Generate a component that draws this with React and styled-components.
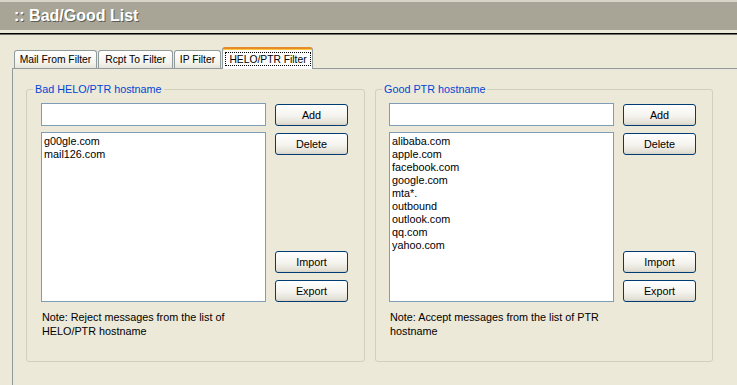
import React from 'react';
import styled, { createGlobalStyle } from 'styled-components';

const GlobalStyle = createGlobalStyle`
  html, body {
    margin: 0;
    overflow: hidden;
    background: #ece9d8;
    font-family: "Liberation Sans", Arial, sans-serif;
    font-size: 10.8px;
    color: #000;
  }
  * { box-sizing: border-box; }
`;

const Header = styled.header`
  height: 30px;
  border-top: 2px solid #d8d5c8;
  background: #a8a596;
  display: flex;
  align-items: center;
  padding-left: 14px;
`;

const Title = styled.h1`
  margin: 0;
  font-size: 16px;
  font-weight: bold;
  color: #fff;
  text-shadow: 1px 1px 0 #5e5c52;
`;

const Rule = styled.div`
  margin-top: 3px;
  height: 2px;
  border-top: 1px solid #000;
  border-bottom: 1px solid #6f6e66;
`;

const TabStrip = styled.div`
  position: relative;
  z-index: 1;
  display: flex;
  align-items: flex-end;
  gap: 1px;
  margin-top: 12px;
  padding-left: 14px;
  font-size: 10.3px;
`;

const Tab = styled.div`
  width: ${p => p.$w}px;
  height: 18px;
  border: 1px solid #919b9c;
  border-bottom: none;
  border-radius: 3px 3px 0 0;
  background: linear-gradient(#ffffff, #f3f2ec 70%, #e6e4da);
  display: flex;
  align-items: center;
  justify-content: center;
  white-space: nowrap;
`;

const ActiveTab = styled(Tab)`
  height: 22px;
  margin-bottom: -1px;
  border-top: 2px solid #e68b2c;
  box-shadow: inset 0 1px 0 #ffc83c;
  background: #fcfcfe;
  padding: 3px 1px 3px 2px;
`;

const Focus = styled.span`
  flex: 1;
  align-self: stretch;
  display: flex;
  align-items: center;
  justify-content: center;
  border: 1px dotted #000;
`;

const Panel = styled.div`
  margin-left: 12px;
  height: 317px;
  border-top: 1px solid #919b9c;
  border-left: 1px solid #919b9c;
  padding: 20px 0 0 13px;
  display: flex;
  gap: 10px;
`;

const Group = styled.div`
  position: relative;
  width: ${p => p.$w}px;
  height: 273px;
  border: 1px solid #d0d0bf;
  border-radius: 3px;
  padding: 13px 16px 0 ${p => p.$pl}px;
  display: flex;
  gap: 9px;
`;

const Legend = styled.span`
  position: absolute;
  top: -7px;
  left: 6px;
  padding: 0 2px;
  line-height: 13px;
  background: #ece9d8;
  color: #0046d5;
`;

const Column = styled.div`
  width: 225px;
  display: flex;
  flex-direction: column;
`;

const TextInput = styled.input`
  height: 23px;
  border: 1px solid #7f9db9;
  background: #fff;
  font: inherit;
  padding: 0 3px;
  outline: none;
`;

const ListBox = styled.div`
  margin-top: 6px;
  height: 170px;
  border: 1px solid #7f9db9;
  background: #fff;
  padding: 2px 2px;
`;

const ListItem = styled.div`
  line-height: 13px;
  white-space: nowrap;
`;

const Note = styled.p`
  margin: 8px 0 0 1px;
  line-height: 14px;
`;

const Buttons = styled.div`
  width: 73px;
  height: 199px;
  padding-top: 1px;
  display: flex;
  flex-direction: column;
  gap: 7px;
`;

const Button = styled.button`
  height: 22px;
  flex: none;
  margin-top: ${p => (p.$push ? 'auto' : '0')};
  border: 1px solid #003c74;
  border-radius: 3px;
  background: linear-gradient(#ffffff, #f4f3ee 55%, #e3e0d5 90%, #d6d0c5);
  font: inherit;
  color: #000;
  padding: 0;
`;

function ListPanel({ title, items, note, width, padLeft }) {
  return (
    <Group $w={width} $pl={padLeft}>
      <Legend>{title}</Legend>
      <Column>
        <TextInput type="text" />
        <ListBox>
          {items.map(item => (
            <ListItem key={item}>{item}</ListItem>
          ))}
        </ListBox>
        <Note>{note}</Note>
      </Column>
      <Buttons>
        <Button>Add</Button>
        <Button>Delete</Button>
        <Button $push>Import</Button>
        <Button>Export</Button>
      </Buttons>
    </Group>
  );
}

const badHosts = ['g00gle.com', 'mail126.com'];
const goodHosts = [
  'alibaba.com',
  'apple.com',
  'facebook.com',
  'google.com',
  'mta*.',
  'outbound',
  'outlook.com',
  'qq.com',
  'yahoo.com',
];

export default function App() {
  return (
    <>
      <GlobalStyle />
      <Header>
        <Title>:: Bad/Good List</Title>
      </Header>
      <Rule />
      <TabStrip>
        <Tab $w={83}>Mail From Filter</Tab>
        <Tab $w={75}>Rcpt To Filter</Tab>
        <Tab $w={47}>IP Filter</Tab>
        <ActiveTab $w={91}>
          <Focus>HELO/PTR Filter</Focus>
        </ActiveTab>
      </TabStrip>
      <Panel>
        <ListPanel
          title="Bad HELO/PTR hostname"
          items={badHosts}
          note="Note: Reject messages from the list of HELO/PTR hostname"
          width={339}
          padLeft={14}
        />
        <ListPanel
          title="Good PTR hostname"
          items={goodHosts}
          note="Note: Accept messages from the list of PTR hostname"
          width={338}
          padLeft={13}
        />
      </Panel>
    </>
  );
}
